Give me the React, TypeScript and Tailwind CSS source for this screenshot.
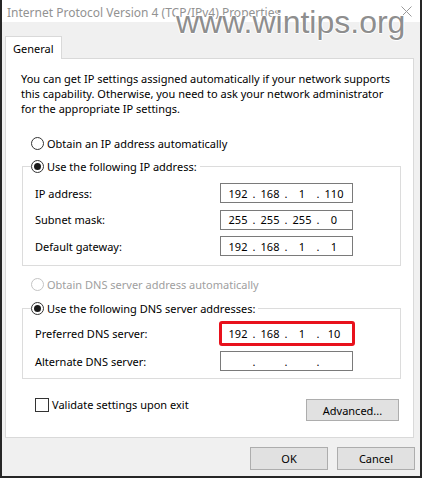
import React from 'react';

const Radio = ({ checked = false, disabled = false }: { checked?: boolean; disabled?: boolean }) => {
  return (
    <span
      className={
        disabled
          ? 'flex h-[13px] w-[13px] shrink-0 items-center justify-center rounded-full border border-[#c4c4c4] bg-white'
          : 'flex h-[13px] w-[13px] shrink-0 items-center justify-center rounded-full border border-[#333333] bg-white'
      }
    >
      {checked && <span className="h-[7px] w-[7px] rounded-full bg-[#1b1b1b]" />}
    </span>
  );
};

const IpValue = ({ parts, pad }: { parts: string[]; pad: string }) => {
  return (
    <div className={`flex h-full items-center ${pad}`}>
      {parts.map((p, i) => (
        <React.Fragment key={i}>
          {i > 0 && <span className="w-[4px] text-center">.</span>}
          <span className="w-[28px] text-center">{p}</span>
        </React.Fragment>
      ))}
    </div>
  );
};

const IpBox = ({ parts }: { parts: string[] }) => (
  <div className="h-[20px] w-[133px] border border-[#7a7a7a] bg-white">
    <IpValue parts={parts} pad="pl-[3px]" />
  </div>
);

const FieldRow = ({ label, children }: { label: string; children: React.ReactNode }) => (
  <div className="flex items-center">
    <span className="w-[185px]">{label}</span>
    {children}
  </div>
);

export default function App() {
  return (
    <div className="relative flex h-[478px] w-[422px] flex-col overflow-hidden border-x-2 border-b-2 border-[#262626] bg-[#f0f0f0] font-['Noto_Sans',sans-serif] text-[11px] leading-[15px] text-black">
      {/* title bar */}
      <div className="flex h-[22px] shrink-0 items-start bg-white pl-[5px] pr-[8px]">
        <span className="pt-[5px] text-[12px] text-[#929292]">Internet Protocol Version 4 (TCP/IPv4) Properties</span>
        <svg className="ml-auto mt-[6px]" width="11" height="11" viewBox="0 0 11 11">
          <path d="M0.5 0.5 L10.5 10.5 M10.5 0.5 L0.5 10.5" stroke="#9a9a9a" strokeWidth="1" />
        </svg>
      </div>

      {/* watermark */}
      <div className="pointer-events-none absolute left-[174px] top-[6px] font-['Liberation_Sans',sans-serif] text-[32px] leading-[32px] text-[#8e8e8e] [text-shadow:1px_0_0_#fff,-1px_0_0_#fff,0_1px_0_#fff,0_-1px_0_#fff]">
        www.wintips.org
      </div>

      <div className="flex flex-1 flex-col px-[3px] pt-[14px]">
        {/* tab */}
        <div className="relative z-10 -mb-px flex h-[23px] w-[57px] items-center border border-b-0 border-[#d9d9d9] bg-white pl-[7px]">
          General
        </div>

        {/* panel */}
        <div className="flex h-[380px] w-[409px] flex-col border border-[#d9d9d9] bg-white">
          <p className="whitespace-nowrap px-[15px] pt-[12px]">
            You can get IP settings assigned automatically if your network supports
            <br />
            this capability. Otherwise, you need to ask your network administrator
            <br />
            for the appropriate IP settings.
          </p>

          <div className="ml-[25px] mt-[20px] flex items-center gap-[3px]">
            <Radio />
            <span>Obtain an IP address automatically</span>
          </div>

          <fieldset className="ml-[16px] mt-[8px] w-[379px] border border-[#dcdcdc] pb-[9px] pl-[12px] pt-[9px]">
            <legend className="ml-[-4px] flex items-center gap-[3px] pr-[3px]">
              <Radio checked />
              <span>Use the following IP address:</span>
            </legend>
            <div className="flex flex-col gap-[6.5px]">
              <FieldRow label="IP address:">
                <IpBox parts={['192', '168', '1', '110']} />
              </FieldRow>
              <FieldRow label="Subnet mask:">
                <IpBox parts={['255', '255', '255', '0']} />
              </FieldRow>
              <FieldRow label="Default gateway:">
                <IpBox parts={['192', '168', '1', '1']} />
              </FieldRow>
            </div>
          </fieldset>

          <div className="ml-[25px] mt-[11px] flex items-center gap-[3px] text-[#a0a0a0]">
            <Radio disabled />
            <span>Obtain DNS server address automatically</span>
          </div>

          <fieldset className="ml-[16px] mt-[9px] w-[379px] border border-[#dcdcdc] pb-[7px] pl-[12px] pt-[5px]">
            <legend className="ml-[-4px] flex items-center gap-[3px] pr-[3px]">
              <Radio checked />
              <span>Use the following DNS server addresses:</span>
            </legend>
            <div className="flex flex-col gap-[5px]">
              <FieldRow label="Preferred DNS server:">
                <div className="-ml-px h-[25px] w-[136px] rounded-[3px] border-[3px] border-[#e8111c] bg-white">
                  <IpValue parts={['192', '168', '1', '10']} pad="pl-[2px]" />
                </div>
              </FieldRow>
              <FieldRow label="Alternate DNS server:">
                <IpBox parts={['', '', '', '']} />
              </FieldRow>
            </div>
          </fieldset>

          <div className="ml-[29px] mr-[14px] mt-[18px] flex items-start justify-between">
            <div className="flex items-center gap-[3px]">
              <span className="h-[14px] w-[14px] border border-[#333333] bg-white" />
              <span>Validate settings upon exit</span>
            </div>
            <div className="mt-[2px] flex h-[22px] w-[93px] items-center justify-center border border-[#adadad] bg-[#e1e1e1]">
              Advanced...
            </div>
          </div>
        </div>

        {/* dialog buttons */}
        <div className="mr-[2px] mt-[9px] flex justify-end gap-[9px]">
          <div className="flex h-[23px] w-[78px] items-center justify-center border border-[#adadad] bg-[#e1e1e1]">
            OK
          </div>
          <div className="flex h-[23px] w-[78px] items-center justify-center border border-[#adadad] bg-[#e1e1e1]">
            Cancel
          </div>
        </div>
      </div>
    </div>
  );
}
